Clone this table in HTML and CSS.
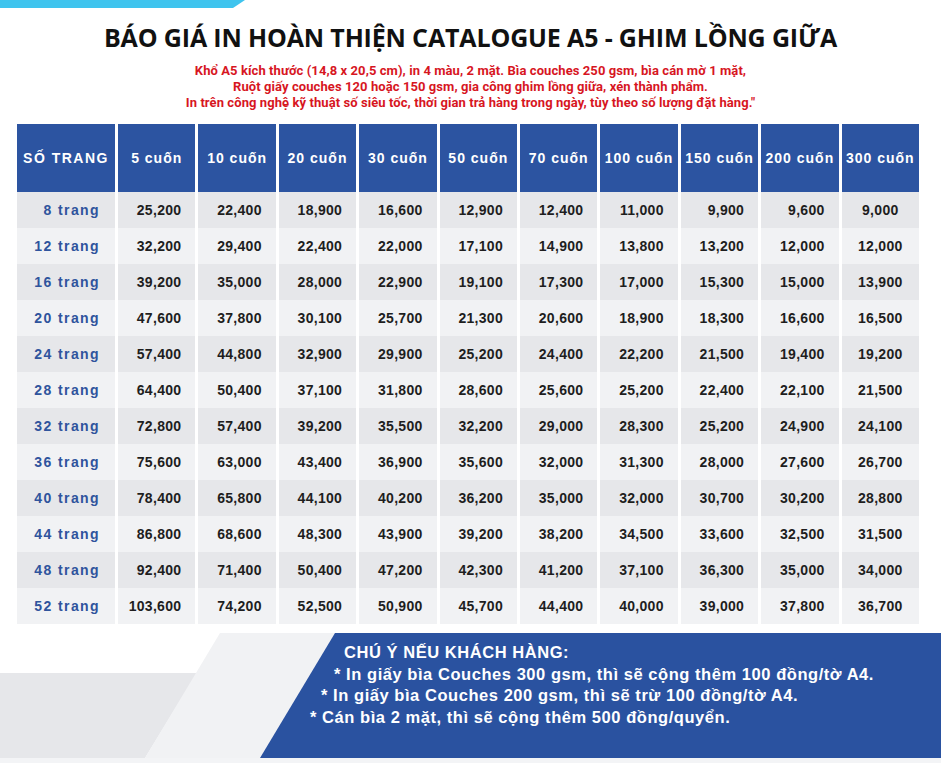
FILE: index.html
```html
<!DOCTYPE html>
<html lang="vi">
<head>
<meta charset="utf-8">
<title>Báo giá in catalogue A5</title>
<link rel="stylesheet" href="styles.css">
</head>
<body>
<div class="page">
  <div class="topbar"></div>
  <h1 class="title">BÁO GIÁ IN HOÀN THIỆN CATALOGUE A5 - GHIM LỒNG GIỮA</h1>
  <div class="sub">
    <div>Khổ A5 kích thước (14,8 x 20,5 cm), in 4 màu, 2 mặt. Bìa couches 250 gsm, bìa cán mờ 1 mặt,</div>
    <div>Ruột giấy couches 120 hoặc 150 gsm, gia công ghim lồng giữa, xén thành phẩm.</div>
    <div>In trên công nghệ kỹ thuật số siêu tốc, thời gian trả hàng trong ngày, tùy theo số lượng đặt hàng."</div>
  </div>
  <div class="grid" id="grid">
    <div class="h first">SỐ TRANG</div>
    <div class="h">5 cuốn</div>
    <div class="h">10 cuốn</div>
    <div class="h">20 cuốn</div>
    <div class="h">30 cuốn</div>
    <div class="h">50 cuốn</div>
    <div class="h">70 cuốn</div>
    <div class="h">100 cuốn</div>
    <div class="h">150 cuốn</div>
    <div class="h">200 cuốn</div>
    <div class="h">300 cuốn</div>

    <div class="c p odd">8 trang</div><div class="c odd">25,200</div><div class="c odd">22,400</div><div class="c odd">18,900</div><div class="c odd">16,600</div><div class="c odd">12,900</div><div class="c odd">12,400</div><div class="c odd">11,000</div><div class="c odd">9,900</div><div class="c odd">9,600</div><div class="c odd last">9,000</div>
    <div class="c p">12 trang</div><div class="c">32,200</div><div class="c">29,400</div><div class="c">22,400</div><div class="c">22,000</div><div class="c">17,100</div><div class="c">14,900</div><div class="c">13,800</div><div class="c">13,200</div><div class="c">12,000</div><div class="c last">12,000</div>
    <div class="c p odd">16 trang</div><div class="c odd">39,200</div><div class="c odd">35,000</div><div class="c odd">28,000</div><div class="c odd">22,900</div><div class="c odd">19,100</div><div class="c odd">17,300</div><div class="c odd">17,000</div><div class="c odd">15,300</div><div class="c odd">15,000</div><div class="c odd last">13,900</div>
    <div class="c p">20 trang</div><div class="c">47,600</div><div class="c">37,800</div><div class="c">30,100</div><div class="c">25,700</div><div class="c">21,300</div><div class="c">20,600</div><div class="c">18,900</div><div class="c">18,300</div><div class="c">16,600</div><div class="c last">16,500</div>
    <div class="c p odd">24 trang</div><div class="c odd">57,400</div><div class="c odd">44,800</div><div class="c odd">32,900</div><div class="c odd">29,900</div><div class="c odd">25,200</div><div class="c odd">24,400</div><div class="c odd">22,200</div><div class="c odd">21,500</div><div class="c odd">19,400</div><div class="c odd last">19,200</div>
    <div class="c p">28 trang</div><div class="c">64,400</div><div class="c">50,400</div><div class="c">37,100</div><div class="c">31,800</div><div class="c">28,600</div><div class="c">25,600</div><div class="c">25,200</div><div class="c">22,400</div><div class="c">22,100</div><div class="c last">21,500</div>
    <div class="c p odd">32 trang</div><div class="c odd">72,800</div><div class="c odd">57,400</div><div class="c odd">39,200</div><div class="c odd">35,500</div><div class="c odd">32,200</div><div class="c odd">29,000</div><div class="c odd">28,300</div><div class="c odd">25,200</div><div class="c odd">24,900</div><div class="c odd last">24,100</div>
    <div class="c p">36 trang</div><div class="c">75,600</div><div class="c">63,000</div><div class="c">43,400</div><div class="c">36,900</div><div class="c">35,600</div><div class="c">32,000</div><div class="c">31,300</div><div class="c">28,000</div><div class="c">27,600</div><div class="c last">26,700</div>
    <div class="c p odd">40 trang</div><div class="c odd">78,400</div><div class="c odd">65,800</div><div class="c odd">44,100</div><div class="c odd">40,200</div><div class="c odd">36,200</div><div class="c odd">35,000</div><div class="c odd">32,000</div><div class="c odd">30,700</div><div class="c odd">30,200</div><div class="c odd last">28,800</div>
    <div class="c p">44 trang</div><div class="c">86,800</div><div class="c">68,600</div><div class="c">48,300</div><div class="c">43,900</div><div class="c">39,200</div><div class="c">38,200</div><div class="c">34,500</div><div class="c">33,600</div><div class="c">32,500</div><div class="c last">31,500</div>
    <div class="c p odd">48 trang</div><div class="c odd">92,400</div><div class="c odd">71,400</div><div class="c odd">50,400</div><div class="c odd">47,200</div><div class="c odd">42,300</div><div class="c odd">41,200</div><div class="c odd">37,100</div><div class="c odd">36,300</div><div class="c odd">35,000</div><div class="c odd last">34,000</div>
    <div class="c p">52 trang</div><div class="c">103,600</div><div class="c">74,200</div><div class="c">52,500</div><div class="c">50,900</div><div class="c">45,700</div><div class="c">44,400</div><div class="c">40,000</div><div class="c">39,000</div><div class="c">37,800</div><div class="c last">36,700</div>
  </div>
  <div class="notice">
    <div class="shade-dark"></div>
    <div class="shade-light"></div>
    <div class="box">
      <div class="l1">CHÚ Ý NẾU KHÁCH HÀNG:</div>
      <div class="l2">* In giấy bìa Couches 300 gsm, thì sẽ cộng thêm 100 đồng/tờ A4.</div>
      <div class="l3">* In giấy bìa Couches 200 gsm, thì sẽ trừ 100 đồng/tờ A4.</div>
      <div class="l4">* Cán bìa 2 mặt, thì sẽ cộng thêm 500 đồng/quyển.</div>
    </div>
  </div>
  <div class="foot"></div>
</div>
</body>
</html>
```

FILE: styles.css
```css
* { box-sizing: border-box; }
html, body { margin: 0; padding: 0; background: #ffffff; }
.page {
  width: 941px;
  height: 763px;
  overflow: hidden;
  font-family: "Liberation Sans", Arial, sans-serif;
}
.topbar {
  width: 245px;
  height: 8px;
  background: #3fc4ee;
  clip-path: polygon(0 0, 245px 0, 233px 8px, 0 8px);
}
.title {
  margin: 14px 0 0;
  text-align: center;
  font-family: "Open Sans", sans-serif;
  font-weight: 700;
  font-size: 25px;
  line-height: 30px;
  letter-spacing: -0.15px;
  color: #111111;
}
.sub {
  margin-top: 11px;
  text-align: center;
  font-family: Roboto, "Liberation Sans", sans-serif;
  font-weight: 700;
  font-size: 13px;
  line-height: 16px;
  letter-spacing: 0.08px;
  color: #d7161f;
}
.grid {
  margin: 13px 0 0 17px;
  width: 902px;
  display: grid;
  grid-template-columns: 98px repeat(10, 1fr);
  grid-template-rows: 68px repeat(12, 36px);
  column-gap: 3px;
}
.h {
  background: #2c54a1;
  color: #ffffff;
  font-weight: 700;
  font-size: 14px;
  letter-spacing: 1px;
  display: flex;
  align-items: center;
  justify-content: center;
  white-space: nowrap;
}
.h.first { letter-spacing: 1.5px; }
.c {
  background: #f1f2f4;
  color: #1e1e1e;
  font-weight: 700;
  font-size: 14px;
  letter-spacing: 0.3px;
  display: flex;
  align-items: center;
  justify-content: flex-end;
  padding-right: 14px;
  white-space: nowrap;
}
.c.odd { background: #e6e7ea; }
.c.p {
  color: #2f549d;
  letter-spacing: 1.4px;
  padding-right: 15px;
}
.c.last { justify-content: center; padding-right: 0; }
.notice {
  position: relative;
  margin-top: 9px;
  height: 125px;
}
.shade-dark {
  position: absolute;
  left: 0;
  top: 40px;
  width: 200px;
  height: 85px;
  background: #e6e7ea;
  clip-path: polygon(0 0, 197px 0, 145px 100%, 0 100%);
}
.shade-light {
  position: absolute;
  inset: 0;
  background: #f1f2f4;
  clip-path: polygon(220px 0, 100% 0, 100% 100%, 145px 100%);
}
.box {
  position: relative;
  margin-left: 260px;
  height: 125px;
  background: #2a52a0;
  clip-path: polygon(75px 0, 100% 0, 100% 100%, 0 100%);
  color: #ffffff;
  font-family: "Liberation Sans", Arial, sans-serif;
  font-weight: 700;
  font-size: 16.5px;
  line-height: 21.5px;
  letter-spacing: 0.55px;
  padding-top: 9px;
  white-space: nowrap;
}
.l1 { padding-left: 84px; }
.l2 { padding-left: 74px; }
.l3 { padding-left: 61px; }
.l4 { padding-left: 50px; }
.foot {
  height: 5px;
  background: #f3f4f6;
}
```
